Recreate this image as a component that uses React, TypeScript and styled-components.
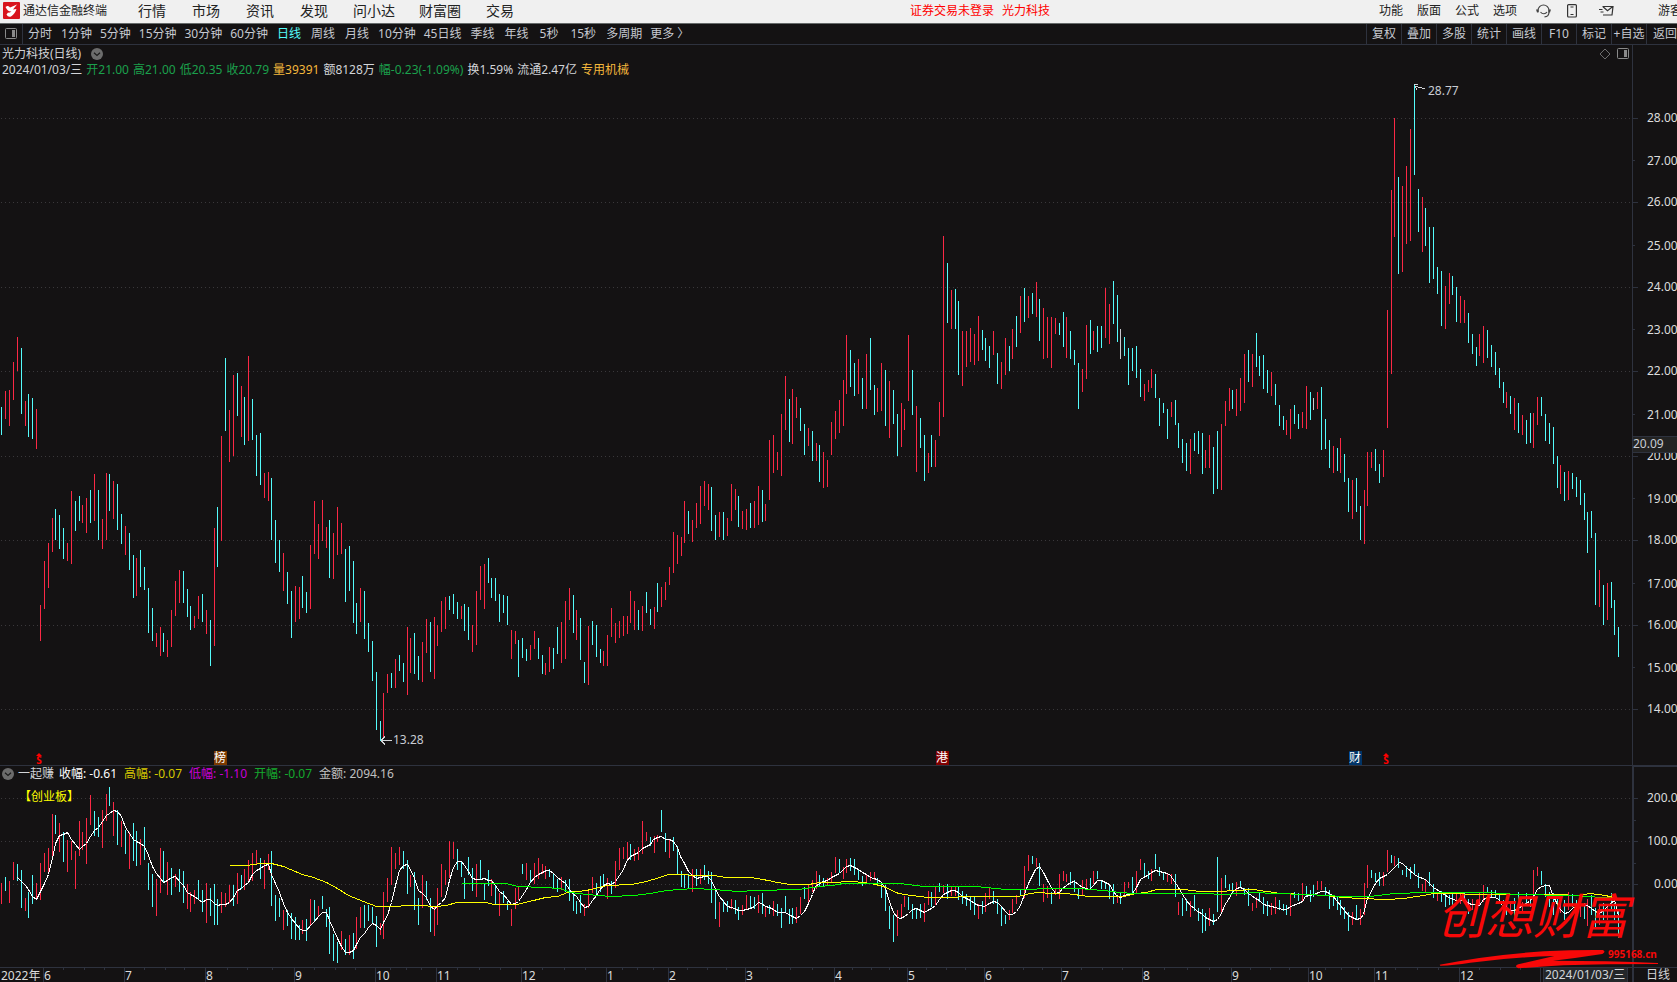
import React from 'react';
import styled, { createGlobalStyle } from 'styled-components';

const GlobalStyle = createGlobalStyle`
  * { box-sizing: border-box; }
  body {
    margin: 0;
    background: #141213;
    font-family: "Noto Sans", "Noto Sans CJK SC", sans-serif;
    font-size: 12px;
    line-height: 14px;
    color: #d2d4d8;
    overflow: hidden;
  }
  button, a {
    font: inherit;
    color: inherit;
    background: none;
    border: 0;
    padding: 0;
    margin: 0;
    white-space: nowrap;
    text-decoration: none;
    cursor: pointer;
  }
  svg { display: block; flex: none; }
  svg text { font-size: 12px; }
`;

const RULE = '#2e323e';
const UP = '#fb2845';
const DOWN = '#54fcfc';
const FLAT = '#c9c9cf';

/* ---------- layout parts ---------- */

const Terminal = styled.div`
  position: relative;
  display: flex;
  flex-direction: column;
  width: 100%;
  height: 100vh;
  min-height: 600px;
  overflow: hidden;
`;

const TitleBar = styled.header`
  display: flex;
  align-items: center;
  height: 24px;
  flex: none;
  padding: 0 0 2px 3px;
  background: #f0f0f0;
  border-bottom: 1px solid #666a6a;
  color: #222;
  overflow: hidden;
`;

const Brand = styled.span`
  margin-left: 3px;
  white-space: nowrap;
  width: 102px;
`;

const MainMenu = styled.nav`
  display: flex;
  font-size: 14px;
  line-height: 20px;
`;

const MenuButton = styled.button`
  min-width: 54px;
  padding: 0 12px;
  text-align: center;
`;

const Status = styled.div`
  flex: 1;
  display: flex;
  justify-content: center;
  gap: 8px;
  padding-left: 54px;
  color: #ff0000;
  white-space: nowrap;
`;

const SystemMenu = styled.nav`
  display: flex;
  align-items: center;
  gap: 14px;
`;

const IconButton = styled.button`
  display: flex;
`;

const SystemIcons = styled.div`
  display: flex;
  align-items: center;
  gap: 16px;
  margin-left: 19px;
  margin-right: 44px;

  ${IconButton}:last-child {
    margin-left: 6px;
  }
`;

const GuestLink = styled.a`
  width: 19px;
  overflow: hidden;
`;

const ToolBar = styled.div`
  display: flex;
  align-items: stretch;
  height: 21px;
  flex: none;
  border-bottom: 1px solid ${RULE};
  color: #c6c9d0;
  overflow: hidden;
`;

const PanelToggle = styled.button`
  width: 23px;
  display: flex;
  align-items: center;
  justify-content: center;
  border-right: 1px solid ${RULE};
`;

const Periods = styled.nav`
  display: flex;
  flex: 1;
`;

const PeriodButton = styled.button<{ $active?: boolean; $pad: number }>`
  padding: 0 ${(p) => p.$pad}px;
  color: ${(p) => (p.$active ? DOWN : 'inherit')};
`;

const Tools = styled.nav`
  display: flex;
`;

const ToolButton = styled.button<{ $last?: boolean }>`
  width: ${(p) => (p.$last ? 31 : 35)}px;
  padding-left: ${(p) => (p.$last ? 6 : 0)}px;
  border-left: 1px solid ${RULE};
  text-align: ${(p) => (p.$last ? 'left' : 'center')};
  overflow: hidden;
`;

const Board = styled.main`
  flex: 1;
  min-height: 0;
  display: grid;
  grid-template-columns: minmax(0, 1fr) 45px;
  grid-template-rows: minmax(0, 1fr) 202px 15px;
`;

const Pane = styled.section<{ $ruled?: boolean }>`
  display: flex;
  flex-direction: column;
  min-width: 0;
  min-height: 0;
  overflow: hidden;
  border-top: ${(p) => (p.$ruled ? `1px solid ${RULE}` : '0')};
`;

const Scale = styled.aside<{ $heavy?: boolean }>`
  overflow: hidden;
  border-left: ${(p) => (p.$heavy ? 2 : 1)}px solid ${RULE};
  border-top: ${(p) => (p.$heavy ? `2px solid ${RULE}` : '0')};
`;

const Canvas = styled.svg`
  width: 100%;
  flex: 1;
  min-height: 0;
`;

const PaneTitle = styled.div`
  display: flex;
  align-items: center;
  height: 18px;
  flex: none;
  padding: 0 3px 0 2px;
`;

const TitleIcons = styled.div`
  display: flex;
  align-items: center;
  gap: 6px;
  margin-left: auto;
`;

const StockName = styled.span`
  width: 89px;
  white-space: nowrap;
`;

const QuoteLine = styled.div`
  display: flex;
  align-items: center;
  gap: 4px;
  height: 17px;
  flex: none;
  padding: 0 0 3px 2px;
  white-space: nowrap;
`;

const IndicatorLine = styled.div`
  display: flex;
  align-items: center;
  gap: 7px;
  height: 16px;
  flex: none;
  padding-left: 2px;
  white-space: nowrap;
`;

const IndicatorName = styled.span`
  margin-left: -3px;
  margin-right: -2px;
`;

const Value = styled.span<{ $color?: string }>`
  color: ${(p) => p.$color ?? 'inherit'};
`;

const Timeline = styled.footer`
  display: flex;
  position: relative;
  border-top: 1px solid ${RULE};
  overflow: hidden;
`;

const DateTag = styled.time`
  position: absolute;
  right: 4px;
  top: 0;
  width: 85px;
  height: 14px;
  padding-left: 1px;
  background: #24272a;
  border-left: 1px solid ${RULE};
  border-right: 1px solid ${RULE};
  white-space: nowrap;
`;

const PeriodTag = styled.div`
  border-top: 1px solid ${RULE};
  border-left: 2px solid ${RULE};
  padding-left: 12px;
  white-space: nowrap;
  overflow: hidden;
`;

const Stamp = styled.svg`
  position: absolute;
  right: 18px;
  bottom: 12px;
  width: 222px;
  height: 82px;
`;

/* ---------- series ---------- */

// Bars are "<kind><high>-<low>", levels counted downwards in thirds of a pixel.
type Segment = { start: number; base: number; bars: string };

const PRICE: Segment[] = [
  {
    start: 0,
    base: 220,
    bars: `c321-405 r273-357 r270-378 r186-300 r111-213 c144-342 r303-378 c282-411 c294-417 r327-447
r915-1023 r783-927 r729-864 r654-756 c627-720 c645-747 c684-777 r729-783 r573-792 c603-693
c588-663 r615-669 r594-699 c570-669 r522-663 c570-720 r657-747 r519-720 c522-633 r543-657
c552-690 c642-732 r678-765 c699-810 c765-894 r774-888 c750-861 c801-870 c864-999 c924-1023
r999-1041 r981-1068 c999-1056 r1020-1071 r930-1041 r843-948 r810-909 c813-909 c867-951 c918-990
r948-984 r888-957 c882-966 r930-1002 c960-1098 r684-1038 c621-801 r408-723 c174-393 r330-486
r225-468 c219-348 r258-411 c291-435 r168-423 c297-420 c405-528 c399-555 r519-594 r516-603
c534-720 c660-789 c720-816 r759-873 c816-912 c873-1014 r858-966 r861-957 c828-924 c876-939
r735-927 r603-762 r672-777 r600-723 r681-744 c660-834 r699-837 r621-765 r669-762 c747-906
c738-873 c783-969 c909-1002 r864-966 c873-1017 c969-1056 c1023-1143 c1116-1290 c1263-1323 r1179-1317
r1122-1179 c1119-1164 r1077-1164 c1065-1113 c1089-1146 r981-1185 r1014-1119 c999-1122 c1068-1140`,
  },
  {
    start: 109,
    base: 270,
    bars: `r876-996 r807-909 c816-966 r801-987 r825-888 r753-846 r741-837 c738-780 c732-792 c756-807
r768-807 c762-843 c771-870 r825-906 r723-885 r648-750 r642-777 c624-699 c684-744 c684-753
c732-816 c735-789 c738-825 r840-927 r843-882 c870-981 c864-924 c897-933 r885-930 r843-897
c864-927 c915-972 r939-975 r891-966 c894-957 c831-912 r816-939 r753-927 r714-810 c735-849
r780-870 c804-930 c936-999 r828-1005 c813-885 c825-921 c897-939 r903-948 r855-948 r774-861
r819-879 r813-864 r798-858 r798-852 r723-819 r753-840 c780-840 r768-843 c726-789 c777-825
r771-837 c699-786 r711-771 r696-750 r651-705 r546-669 r555-642 r561-618 r453-579 c483-552
r510-576 r459-534 r408-522 r393-468 r402-480 c411-543 c495-570 r486-561 c486-570 r504-558
r402-513 r417-480 c438-531 r483-537 r477-540 c459-534 r453-534 r408-525 c420-516 r462-513
r270-450 r255-369 r306-360 r192-378 r78-240 c147-276 r117-282 r141-204 c174-243 c222-315
r234-288 c243-333 r279-333 c285-396`,
  },
  {
    start: 213,
    base: 130,
    bars: `r726-834 r750-831 r636-735 r603-687 r570-669 r510-648 r375-552 c420-531 c459-558 r447-552
c504-597 r432-597 c384-540 c525-615 r534-606 r459-603 c480-648 r513-684 c540-642 c612-738
r579-711 r597-660 r375-573 c480-615 r588-786 c624-714 c675-813 r729-789 c675-771 r690-771
r576-678 r78-621 c159-339 r240-357 c237-357 c273-495 r363-528 r363-471 r354-456 r372-465
r318-453 c360-420 c384-453 c408-474 r363-435 c429-522 r456-537 r384-495 c408-483 r357-447
c318-411 r258-369 c234-336 r258-324 c249-312 r216-321 c267-393 r294-447 r321-444 r321-474
r324-372 c339-375 c306-411 r321-444 c363-447 c420-465 c459-597 r477-546 r345-507 c330-432
r363-420 c348-426 c348-414 r234-384 r282-402 c213-342 c255-396 w357-447 c381-438 c414-525
c414-483 c408-504 c477-561 r522-573 r510-546 r477-534 c492-564 c564-648 c579-609 c597-687
r576-621 c570-645 c639-714 c687-759 c699-783 r687-792 c669-723 c663-732 c669-792 r720-774
r675-774 c711-852 c663-837`,
  },
  {
    start: 316,
    base: -10,
    bars: `r1062-1260 r993-1068 r954-1023 c960-1017 r957-1038 r924-1023 r852-999 c840-936 r852-951 c789-891
c858-918 c855-957 c900-969 r906-978 c942-1005 c1005-1068 c1038-1080 r1050-1095 r1017-1107 c1005-1062
c1032-1077 r1026-1074 r948-1077 c966-1050 w984-1020 r966-1017 c951-1140 c1047-1137 c1110-1194 r1128-1209
c1134-1203 r1104-1209 c1152-1236 c1224-1326 r1230-1347 c1224-1326 c1308-1410 r1260-1422 r1146-1308 r1146-1194
c1137-1203 c1182-1239 r1140-1221 r720-1074 r360-912 r144-501 c321-612 r348-606 r288-522 r177-513
c45-315 c357-486 r381-546 c414-528 c471-639 c471-627 c591-672 c603-768 r648-777 r609-702
c618-675 c651-756 r678-759 r690-759 c729-819 c792-852 c831-888 r792-858 r768-879 c780-864
c825-891 c846-915 c894-954 c936-999 r966-1014 c978-1032 r984-1080 c999-1089 r1035-1095 c1050-1122
c1029-1119 r1029-1134 r981-1065 c981-1038 c1032-1113 c1059-1122 c1071-1182 c1158-1254 r1185-1272 c1206-1293
r1203-1290 c1209-1257 c1221-1281 c1230-1305 c1269-1350 c1326-1449 c1323-1404 c1389-1605 r1500-1611 c1545-1665
r1539-1650 c1536-1614 c1590-1695 c1671-1761`,
  },
];

const SWING: Segment[] = [
  {
    start: 0,
    base: -42,
    bars: `r429-492 c411-453 r423-489 r366-420 c372-423 c390-504 r474-513 c456-534 c405-492 r429-477
r369-480 r339-396 r324-402 r222-357 c225-282 r249-336 c276-366 r300-396 r303-360 r333-447
r243-348 r276-330 r234-372 r165-255 c213-288 c231-291 r210-324 r162-243 c141-198 r186-288
c210-315 r243-321 c270-342 r276-387 c249-363 c273-378 r297-375 c261-360 c369-450 c402-501
r417-528 r324-459 c333-429 r366-465 c384-465 r402-441 c387-456 c393-489 r432-507 r456-516
r450-492 c420-477 c450-516 r429-549 c444-528 c432-555 c477-555 r456-519 r459-501 r435-489
c435-498 r399-492 c405-447 r387-450 r360-429 r339-423 r330-372 c354-417 r360-447 r342-390
c333-498 c465-543 c474-531 r510-570 c510-558 c519-597 c531-600 c555-600 r540-582 c537-603
r477-555 c480-546 r498-528 c468-507 c507-561 c501-642 c582-663 c606-669 r573-630 c597-645
r585-645 c579-657 r531-627 r501-564 c495-564 c495-543 c501-552 c528-621 r549-585 r456-597
r414-486 r321-435 r339-387 r321-375 c333-387 c360-462 r405-441 c396-510 c474-555`,
  },
  {
    start: 109,
    base: -42,
    bars: `r405-504 c423-480 c474-576 r500-588 r444-555 r372-471 r390-435 r303-414 r306-357 c327-390
c366-411 c414-477 c351-405 c384-453 r372-471 c360-417 c429-480 c390-438 r417-468 c435-492
r459-528 c453-489 c483-510 r507-558 r444-507 r441-480 c372-402 r369-420 c390-429 r369-432
r354-417 r372-402 r378-417 c387-411 c402-444 c417-456 r411-450 c420-456 c417-483 c456-513
c483-522 c465-519 r492-528 r447-504 r411-459 c429-462 c408-456 c402-438 r414-477 c423-462
r363-444 r324-390 r321-357 r306-357 c312-360 r327-363 r321-360 r243-342 r276-303 c291-318
r288-339 r285-306 c210-276 c279-336 r300-354 c291-333 c318-402 c393-441 c402-444 c402-444
r387-456 c387-438 r387-432 c375-420 c393-432 c396-489 c450-537 r486-561 c480-516 c483-516
r477-507 c480-522 c501-540 r495-525 r465-507 c468-504 c471-507 r465-519 c459-522 r498-531
c495-522 r483-528 c492-528 c504-564 c468-516 c507-552 c504-552 r501-549 r471-522 c441-477
r432-486 r420-456 r393-447 c405-438 c414-438 r414-438 r396-429 r351-399 c357-399`,
  },
  {
    start: 218,
    base: -42,
    bars: `r381-417 r357-399 c354-393 c357-405 c390-420 c408-438 r402-432 r396-423 r396-420 c414-435
c429-474 c435-513 c498-567 c525-606 r510-588 r492-534 r468-501 c471-510 c492-537 c507-537
c492-534 r489-546 r453-495 c456-501 r441-495 c429-456 r435-459 c432-477 r441-468 r438-468
c441-480 c453-492 c462-498 c471-510 c471-525 r492-537 c483-522 r459-516 r441-477 c453-492
c477-522 c498-558 c525-552 r510-540 r477-519 r465-492 c447-468 r378-474 r345-393 c348-372
r354-381 c369-438 r432-486 r438-474 c456-492 r444-465 r402-477 r393-423 r402-426 c396-435
c420-456 c447-477 r420-468 r417-447 c414-444 r393-432 c393-417 c420-447 c426-447 c432-477
c432-492 r465-489 c459-492 r426-468 r426-444 c411-459 r393-459 r357-390 c369-414 c393-417
r387-423 c342-387 c381-408 c396-420 r399-426 r402-432 c402-471 r486-525 c474-528 c477-513
r483-531 c465-513 c504-543 c507-579 c519-573 r504-558 c522-555 c351-516 r414-516 c405-444
c432-453 c429-456 r426-468 c423-441 c444-465 c444-498 r489-513 r471-504 c459-486`,
  },
  {
    start: 327,
    base: -42,
    bars: `c471-522 c483-528 r489-525 r471-522 c480-510 c492-513 c495-525 r462-528 c456-474 c459-483
r429-486 c438-468 c450-486 c435-471 r423-450 r423-450 c441-465 c450-507 c465-498 c468-510
c480-525 c501-537 c516-573 r516-555 c495-540 r507-555 r429-525 r375-444 c390-414 c399-426
c396-438 r396-438 r330-396 c345-369 r348-378 c354-384 c390-405 c378-411 c381-417 c372-405
c399-444 r432-453 r417-456 c396-438 c432-474 r456-483 c453-486 c459-501 c465-495 c462-498
r456-486 r462-492 c459-486 c477-522 r477-510 r480-513 r459-498 r435-486 c441-459 c450-474
c450-474 c462-490 c480-510 c492-525 r486-519 c474-534 c456-504 r486-513 c459-495 c474-501
r390-495 r381-408 c393-435 c432-471 c456-501 c459-525 c474-513 r489-519 c480-540 r456-510
c462-501 c480-519 r492-531 c489-537 r477-558 c465-525 c504-561 r495-555 c489-540 r495-540
c459-513 c489-540 c510-594`,
  },
];

// Line points are "x,y" in thirds of a pixel; each chunk starts at its own left edge.
type Chunk = { left: number; points: string };

const FAST: Chunk[] = [
  {
    left: 0,
    points: `52,412 64,425 76,435 85,447 97,468 109,478 121,455 133,430 145,402 157,355 166,310 178,285 190,282 202,278 214,297 226,312 238,327 247,320 259,309 271,290 283,270 295,261 307,243 319,225 328,219 340,211 352,213 364,228 376,261 388,279 400,297 409,303 421,309 433,318 445,345 457,378 469,399 481,414 490,426 502,420 514,411 526,408 538,423 550,435 562,456 571,462 583,469 595,477 607,487 619,477 631,477 643,489 652,497 664,492 676,494 688,487 700,471 712,450 724,444 733,436 745,426 757,402 769,390 781,384 793,376 805,374 814,402 826,429 838,456 850,489 862,516 874,534 886,549 898,564 907,570 919,571 931,557 943,544 955,528 967,516 979,516 988,540 1000,567 1012,594 1024,618 1036,636 1048,637 1060,630 1069,612 1081,591 1093,579 1105,561 1117,550 1129,555 1141,567 1150,546 1162,525 1174,486 1186,435 1198,390 1210,376 1222,372 1231,387 1243,414 1255,450`,
  },
  {
    left: 1260,
    points: `7,459 19,471 31,498 43,507 52,495 64,486 76,471 88,420 100,381 112,364 124,364 133,375 145,393 157,414 169,419 181,419 193,415 205,420 214,420 226,435 238,453 250,462 262,477 274,492 286,490 295,483 307,465 319,447 331,426 343,411 355,402 367,396 379,391 388,391 400,400 412,412 424,420 436,430 448,447 457,459 469,470 481,486 493,502 505,498 517,480 529,465 538,450 550,437 562,430 574,433 586,423 598,405 610,387 619,363 631,348 643,342 655,337 667,325 679,318 691,312 700,297 712,291 724,289 736,297 748,298 760,303 772,321 781,348 793,369 805,393 817,406 829,414 841,411 853,408 862,408 874,420 886,447 898,468 910,484 922,498 934,502 943,504 955,511 967,511 979,507 991,504 1003,498 1015,486 1024,489 1036,498 1048,501 1060,508 1072,516 1084,517 1096,516 1105,522 1117,528 1129,535 1141,525 1153,513 1165,489 1177,463 1186,438 1198,429 1210,424 1222,420 1234,413 1246,405 1258,399`,
  },
  {
    left: 2520,
    points: `10,388 19,378 31,376 43,381 55,387 67,396 79,402 91,411 100,415 112,418 124,426 136,444 148,484 160,516 172,531 181,534 193,529 205,519 217,508 229,505 241,510 253,517 262,512 274,504 286,495 298,477 310,464 322,457 334,451 343,451 355,457 367,468 379,474 391,480 403,490 415,496 432,500 448,489 460,484 472,486 484,498 496,513 505,523 517,523 529,515 541,495 553,462 565,429 577,405 586,387 598,378 610,396 622,420 634,441 646,459 658,458 667,444 679,435 691,428 703,424 715,433 727,442 739,446 748,447 760,435 772,421 784,421 796,426 808,432 820,453 829,465 841,471 853,466 865,462 877,459 889,441 901,417 910,411 922,405 934,396 946,391 958,394 970,397 982,400 991,405 1003,423 1015,441 1027,462 1039,480 1051,495 1063,506 1072,513 1084,521 1096,533 1108,539 1120,543 1132,537 1144,520 1153,495 1165,478 1177,458 1189,444 1201,442 1213,447 1225,459 1234,466 1246,476`,
  },
  {
    left: 3771,
    points: `7,480 19,492 31,496 55,501 76,508 88,508 100,498 124,489 136,483 145,468 169,463 193,455 205,455 217,459 226,465 250,495 274,525 298,538 310,535 319,522 331,474 355,429 367,415 391,402 412,381 428,367 436,370 448,381 472,402 481,408 505,419 529,441 553,456 574,473 598,480 622,481 643,492 667,496 679,477 691,471 715,471 724,477 736,495 748,510 772,512 784,504 796,495 817,483 829,468 841,447 853,440 868,435 877,436 886,462 898,486 910,507 922,519 934,516 946,504 967,492 991,495 1003,504 1015,515 1027,519 1039,510 1060,489 1072,480 1084,525`,
  },
];

const MIDDLE: Chunk[] = [
  {
    left: 0,
    points: `687,376 745,376 754,373 787,370 814,369 850,379 870,388 907,403 940,411 979,427 1012,446 1045,465 1090,484 1130,498 1200,499 1203,496 1260,496`,
  },
  {
    left: 1260,
    points: `45,499 80,496 110,487 195,487 222,493 290,493 340,480 375,471 412,468 442,457 500,450 562,436 635,433 680,424 718,411 745,403 787,403 817,407 880,407 918,411 990,412 1045,420 1072,427 1112,433 1165,433 1200,428 1260,428`,
  },
  {
    left: 2520,
    points: `5,425 40,425 95,431 130,440 175,459 215,466 265,472 345,472 360,469 535,469 555,463 590,458 640,461 680,461 745,468 850,468 890,461 920,457 950,449 1030,449 1080,453 1150,454 1175,450 1250,449`,
  },
  {
    left: 3771,
    points: `0,451 30,455 70,461 150,464 205,467 260,473 310,475 390,478 440,474 500,467 530,461 590,460 650,464 720,462 900,462 960,465 1000,460 1045,467 1080,474`,
  },
];

const SLOW: Chunk[] = [
  {
    left: 1260,
    points: `123,431 255,431 295,439 370,442 420,446 450,456 500,463 570,468 640,465 690,461 740,452 820,446 880,447 955,453 1010,451 1135,447 1200,440 1260,433`,
  },
  {
    left: 2520,
    points: `0,431 180,431 250,438 405,440 500,448 580,447 600,445 715,446 790,450 840,457 880,461 1090,461 1150,463 1200,460 1250,457`,
  },
  {
    left: 3771,
    points: `50,459 150,464 260,470 340,469 410,461 510,457 690,458 780,462 940,465 1040,471 1084,475`,
  },
];

const PITCH = 3.8591;
const ORIGIN = 1.8549;
const barX = (index: number) => Math.floor(ORIGIN + index * PITCH);

function barPath(segments: Segment[], kind: string) {
  return segments
    .flatMap(({ start, base, bars }) =>
      bars.split(/\s+/).map((bar, i) => {
        if (bar[0] !== kind) return '';
        const [high, low] = bar.slice(1).split('-').map(Number);
        return `M${barX(start + i) + 0.5} ${Math.round(base + high / 3)}V${Math.round(base + low / 3)}`;
      }),
    )
    .join('');
}

function linePoints(chunks: Chunk[], base: number) {
  return chunks
    .flatMap(({ left, points }) =>
      points.split(' ').map((pair) => {
        const [x, y] = pair.split(',').map(Number);
        return `${Math.floor((left + x) / 3) + 0.5},${Math.floor(base + y / 3) + 0.5}`;
      }),
    )
    .join(' ');
}

function Bars({ segments }: { segments: Segment[] }) {
  return (
    <g fill="none" strokeWidth="1" shapeRendering="crispEdges">
      <path d={barPath(segments, 'r')} stroke={UP} />
      <path d={barPath(segments, 'c')} stroke={DOWN} />
      <path d={barPath(segments, 'w')} stroke={FLAT} />
    </g>
  );
}

function GridLines({ levels }: { levels: number[] }) {
  return (
    <g stroke="#3a383b" strokeDasharray="1 3" shapeRendering="crispEdges">
      {levels.map((y) => (
        <line key={y} x1="1" x2="100%" y1={y + 0.5} y2={y + 0.5} />
      ))}
    </g>
  );
}

/* ---------- icons ---------- */

const Logo = () => (
  <svg width="17" height="17" viewBox="0 0 17 17" aria-hidden="true">
    <rect width="17" height="17" rx="1" fill="#d8141c" />
    <path d="M2.5 5C5 3 6 4 7 5.500L14 2.500 10 7.500 13.500 7Q12 12 8 14.500 5 15.500 3.500 12.500L5 10.500Q7 11 8.500 9.500 5 10 2.500 5z" fill="#fff" />
  </svg>
);

const LayoutIcon = ({ color = '#8a8a8a' }: { color?: string }) => (
  <svg width="12" height="12" viewBox="0 0 12 12" aria-hidden="true">
    <rect x="0.5" y="0.5" width="11" height="10" rx="1" fill="none" stroke={color} />
    <rect x="7" y="2" width="3" height="7" fill={color} />
  </svg>
);

const DropIcon = () => (
  <svg width="12" height="12" viewBox="0 0 12 12" aria-hidden="true">
    <circle cx="6" cy="6" r="6" fill="#6c6c6c" />
    <path d="M3 4.8l3 2.6 3-2.6" fill="none" stroke="#1b1b1b" strokeWidth="1.2" />
  </svg>
);

const DiamondIcon = () => (
  <svg width="12" height="12" viewBox="0 0 12 12" aria-hidden="true">
    <path d="M6 1l5 5-5 5-5-5z" fill="none" stroke="#6d6d6d" />
  </svg>
);

const ServiceIcon = () => (
  <svg width="15" height="14" viewBox="0 0 15 14" aria-hidden="true">
    <path
      d="M2 8V6.5a5.5 5.5 0 0111 0V8c0 3-2 4.8-4.5 4.8M4.5 8c2 2.5 5 2.2 6.500 0"
      fill="none"
      stroke="#444"
      strokeWidth="1.2"
    />
    <path d="M0 5.5h2.5v3H1zM15 5.5h-2.500v3H14z" fill="#444" />
  </svg>
);

const PhoneIcon = () => (
  <svg width="10" height="14" viewBox="0 0 10 14" aria-hidden="true">
    <rect x="0.6" y="0.6" width="8.8" height="12.4" rx="1" fill="none" stroke="#333" strokeWidth="1.2" />
    <path d="M3.5 3h3M3.5 10.5h3" stroke="#333" strokeWidth="1.2" />
  </svg>
);

const MailIcon = () => (
  <svg width="15" height="12" viewBox="0 0 15 12" aria-hidden="true">
    <path
      d="M3.5 1.5h10.5l-1 8.5H4M4 1.8l4.5 4 5-4M0 4.5h3.5M1.5 7h3"
      fill="none"
      stroke="#333"
      strokeWidth="1.2"
    />
  </svg>
);

/* ---------- content ---------- */

const MENU = ['行情', '市场', '资讯', '发现', '问小达', '财富圈', '交易'];
const SYSTEM = ['功能', '版面', '公式', '选项'];

const PERIODS: { label: string; pad: number }[] = [
  { label: '分时', pad: 5 },
  { label: '1分钟', pad: 4 },
  { label: '5分钟', pad: 4 },
  { label: '15分钟', pad: 4 },
  { label: '30分钟', pad: 4 },
  { label: '60分钟', pad: 4 },
  { label: '日线', pad: 5 },
  { label: '周线', pad: 5 },
  { label: '月线', pad: 5 },
  { label: '10分钟', pad: 4 },
  { label: '45日线', pad: 4 },
  { label: '季线', pad: 5 },
  { label: '年线', pad: 5 },
  { label: '5秒', pad: 6 },
  { label: '15秒', pad: 6 },
  { label: '多周期', pad: 4 },
  { label: '更多 〉', pad: 4 },
];

const TOOLS = ['复权', '叠加', '多股', '统计', '画线', 'F10', '标记', '+自选', '返回'];

const GREEN = '#1ba04c';
const QUOTE: { text: string; color?: string }[] = [
  { text: '2024/01/03/三' },
  { text: '开21.00', color: GREEN },
  { text: '高21.00', color: GREEN },
  { text: '低20.35', color: GREEN },
  { text: '收20.79', color: GREEN },
  { text: '量39391', color: '#f5b83c' },
  { text: '额8128万' },
  { text: '幅-0.23(-1.09%)', color: GREEN },
  { text: '换1.59%' },
  { text: '流通2.47亿' },
  { text: '专用机械', color: '#f5b83c' },
];

const READINGS = [
  { text: '收幅: -0.61', color: '#ffffff' },
  { text: '高幅: -0.07', color: '#d6c800' },
  { text: '低幅: -1.10', color: '#c800d6' },
  { text: '开幅: -0.07', color: '#14a82e' },
  { text: '金额: 2094.16', color: '#c0c0c0' },
];

const PRICE_LEVELS = [73, 115, 157, 200, 242, 284, 326, 369, 411, 453, 495, 538, 580, 622, 664];

const MONTHS: [number, string][] = [
  [43, '6'], [124, '7'], [205, '8'], [294, '9'], [375, '10'], [436, '11'], [521, '12'],
  [606, '1'], [668, '2'], [745, '3'], [834, '4'], [907, '5'], [984, '6'], [1061, '7'],
  [1142, '8'], [1231, '9'], [1308, '10'], [1374, '11'], [1459, '12'], [1540, ''],
];

const WEEKS = [
  63, 84, 104, 144, 165, 184, 227, 247, 272, 314, 335, 355, 390, 406, 421, 457, 479, 500, 542, 564,
  585, 622, 637, 653, 687, 707, 726, 767, 790, 812, 852, 871, 889, 926, 946, 965, 1003, 1023, 1042,
  1081, 1102, 1122, 1164, 1187, 1209, 1250, 1270, 1289, 1325, 1341, 1358, 1395, 1417, 1438, 1479,
  1500, 1520,
];

const EVENTS = [
  { x: 214, label: '榜', fill: '#7b3a00' },
  { x: 936, label: '港', fill: '#800000' },
  { x: 1349, label: '财', fill: '#003468' },
];

function PriceChart() {
  return (
    <Canvas role="img" aria-label="光力科技 日线">
      <GridLines levels={[38, 122, 207, 291, 376, 460, 545, 629]} />
      <Bars segments={PRICE} />
      <g stroke="#d2d4d8" fill="none" shapeRendering="crispEdges">
        <path d="M1414 4.5h4M1415 6l10 3M1415 6l2 4" />
        <path d="M381 660.5h11M381 660.5l4-4M381 660.5l4 4" />
      </g>
      <g fill="#c9ccd3">
        <text x="1428" y="15">28.77</text>
        <text x="393" y="664">13.28</text>
      </g>
      {[39, 1386].map((x) => (
        <g key={x} fill="#ff0000">
          <path d={`M${x} 673l3 3h-6z`} />
          <text x={x} y="684" textAnchor="middle" fontWeight="bold" style={{ fontSize: 10 }}>
            S
          </text>
        </g>
      ))}
      {EVENTS.map((event) => (
        <g key={event.x}>
          <rect x={event.x} y="671" width="13" height="14" fill={event.fill} />
          <text x={event.x + 6} y="682" textAnchor="middle" fill="#fff">
            {event.label}
          </text>
        </g>
      ))}
    </Canvas>
  );
}

function IndicatorChart() {
  return (
    <Canvas role="img" aria-label="一起赚">
      <GridLines levels={[16, 59, 102]} />
      <Bars segments={SWING} />
      <g fill="none" shapeRendering="crispEdges">
        <polyline points={linePoints(FAST, -42)} stroke="#ffffff" />
        <polyline points={linePoints(MIDDLE, -42)} stroke="#ffff00" />
        <polyline points={linePoints(SLOW, -42)} stroke="#00ff00" />
      </g>
      <text x="19" y="19" fill="#ffff00">
        【创业板】
      </text>
    </Canvas>
  );
}

function PriceScale() {
  return (
    <Canvas width="100%" height="100%">
      {PRICE_LEVELS.map((y, i) => (
        <g key={y}>
          <line x1="0" x2={i % 2 ? 2 : 5} y1={y + 0.5} y2={y + 0.5} stroke={RULE} />
          <text x="14" y={i % 2 ? y + 5 : y + 4} fill="#dcdcdc">
            {(28 - i).toFixed(2)}
          </text>
        </g>
      ))}
      <rect x="-1" y="391.5" width="60" height="16" fill="#232323" stroke={RULE} />
      <text x="0" y="403" fill="#c9ccd3">
        20.09
      </text>
    </Canvas>
  );
}

function IndicatorScale() {
  return (
    <Canvas width="100%" height="100%">
      {['200.00', '100.00', '0.00'].map((label, i) => {
        const y = 31 + i * 43;
        return (
          <g key={label}>
            <line x1="0" x2="4" y1={y + 0.5} y2={y + 0.5} stroke={RULE} />
            <text x={label === '0.00' ? 20 : 13} y={y + 4} fill="#dcdcdc">
              {label}
            </text>
          </g>
        );
      })}
      <path d="M0 53.5h2M0 96.5h2" stroke={RULE} />
    </Canvas>
  );
}

export default function App() {
  return (
    <Terminal>
      <GlobalStyle />
      <TitleBar>
        <Logo />
        <Brand>通达信金融终端</Brand>
        <MainMenu>
          {MENU.map((label) => (
            <MenuButton key={label}>{label}</MenuButton>
          ))}
        </MainMenu>
        <Status>
          <span>证券交易未登录</span>
          <span>光力科技</span>
        </Status>
        <SystemMenu>
          {SYSTEM.map((label) => (
            <button key={label}>{label}</button>
          ))}
        </SystemMenu>
        <SystemIcons>
          <IconButton aria-label="客服"><ServiceIcon /></IconButton>
          <IconButton aria-label="手机"><PhoneIcon /></IconButton>
          <IconButton aria-label="邮件"><MailIcon /></IconButton>
        </SystemIcons>
        <GuestLink href="#">游客</GuestLink>
      </TitleBar>

      <ToolBar>
        <PanelToggle aria-label="侧栏"><LayoutIcon /></PanelToggle>
        <Periods>
          {PERIODS.map(({ label, pad }) => (
            <PeriodButton key={label} $pad={pad} $active={label === '日线'}>
              {label}
            </PeriodButton>
          ))}
        </Periods>
        <Tools>
          {TOOLS.map((label, i) => (
            <ToolButton key={label} $last={i === TOOLS.length - 1}>
              {label}
            </ToolButton>
          ))}
        </Tools>
      </ToolBar>

      <Board>
        <Pane>
          <PaneTitle>
            <StockName>光力科技(日线)</StockName>
            <IconButton aria-label="展开"><DropIcon /></IconButton>
            <TitleIcons>
              <IconButton aria-label="标注"><DiamondIcon /></IconButton>
              <IconButton aria-label="布局"><LayoutIcon /></IconButton>
            </TitleIcons>
          </PaneTitle>
          <QuoteLine>
            {QUOTE.map(({ text, color }) => (
              <Value key={text} $color={color}>{text}</Value>
            ))}
          </QuoteLine>
          <PriceChart />
        </Pane>
        <Scale>
          <PriceScale />
        </Scale>

        <Pane $ruled>
          <IndicatorLine>
            <IconButton aria-label="指标"><DropIcon /></IconButton>
            <IndicatorName>一起赚</IndicatorName>
            {READINGS.map(({ text, color }) => (
              <Value key={text} $color={color}>{text}</Value>
            ))}
          </IndicatorLine>
          <IndicatorChart />
        </Pane>
        <Scale $heavy>
          <IndicatorScale />
        </Scale>

        <Timeline>
          <Canvas>
            <g stroke={RULE} shapeRendering="crispEdges">
              {MONTHS.map(([x]) => (
                <line key={x} x1={x + 0.5} x2={x + 0.5} y1="0" y2="14" />
              ))}
              {WEEKS.map((x) => (
                <line key={x} x1={x + 0.5} x2={x + 0.5} y1="0" y2="2" />
              ))}
            </g>
            <g fill="#dcdcdc">
              <text x="1" y="12">2022年</text>
              {MONTHS.map(([x, label]) => (
                <text key={x} x={x + 1} y="12">{label}</text>
              ))}
            </g>
          </Canvas>
          <DateTag dateTime="2024-01-03">2024/01/03/三</DateTag>
        </Timeline>
        <PeriodTag>日线</PeriodTag>
      </Board>

      <Stamp viewBox="540 444 666 246" aria-label="创想财富 995168.cn">
        <g fill="#f80808">
          <text x="540" y="583" fontStyle="italic" style={{ fontSize: 144 }}>
            创想财富
          </text>
          <path d="M548 674Q700 644 860 634Q960 629 1038 630Q1048 636 1036 642Q960 654 888 662Q1050 662 1203 669L1203 672Q1040 672 920 676Q850 680 784 685Q770 678 784 673L892 648Q760 652 640 668Q590 676 550 677Z" />
          <text x="1053" y="654" fontWeight="bold" style={{ fontSize: 30 }}>
            995168.cn
          </text>
        </g>
      </Stamp>
    </Terminal>
  );
}
